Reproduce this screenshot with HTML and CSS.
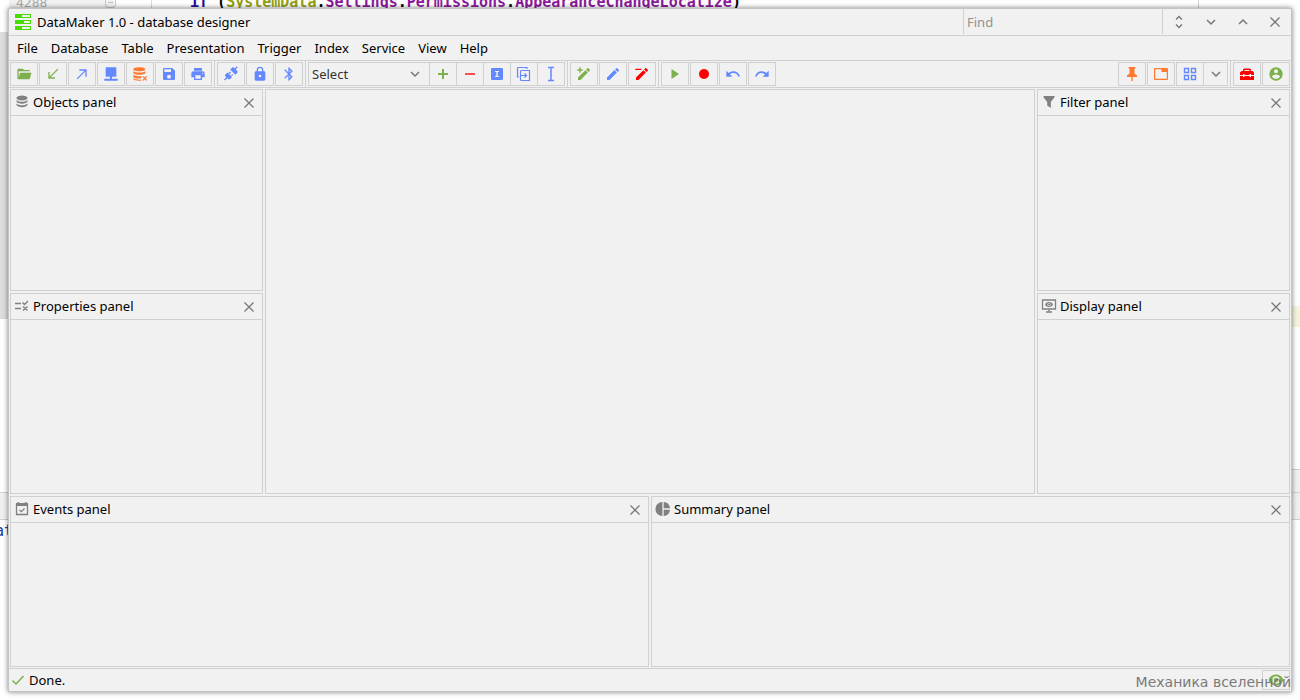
FILE: index.html
```html
<!DOCTYPE html>
<html lang="en">
<head>
  <meta charset="UTF-8">
  <meta name="viewport" content="width=device-width, initial-scale=1.0">
  <title>DataMaker 1.0 - database designer</title>
  <link rel="stylesheet" href="styles.css">
</head>
<body>

  <!-- Icons used more than once -->
  <svg class="sprite" aria-hidden="true">
    <symbol id="close" viewBox="0 0 16 16"><path d="M3.5 3.5l9 9M12.5 3.5l-9 9" fill="none" stroke="currentColor" stroke-width="1.3"/></symbol>
    <symbol id="down" viewBox="0 0 16 16"><path d="M4 6l4 4 4-4" fill="none" stroke="currentColor" stroke-width="1.5"/></symbol>
  </svg>

  <!-- Code editor behind the window -->
  <div class="editor" aria-hidden="true">
    <div class="gutter"><span>4288</span><i class="fold"></i></div>
    <div class="code"><b class="kw">if</b> (<span class="type">SystemData</span>.<span class="prop">Settings</span>.<span class="prop">Permissions</span>.<span class="prop">AppearanceChangeLocalize</span>)</div>
    <div class="margin-line"></div>
    <div class="strip strip-left"></div>
    <div class="strip strip-tabs"></div>
    <div class="strip strip-mark"></div>
    <div class="strip strip-right"></div>
    <div class="word">at</div>
  </div>

  <div class="window">
    <header class="titlebar">
      <svg class="logo" viewBox="0 0 16 16"><path fill="#4bdc05" fill-rule="evenodd" d="M0 0h16v4H0zM7 1v2h8V1zM0 6h16v4H0zM9 7v2h6V7zM0 12h16v4H0zM7 13v2h8v-2z"/></svg>
      <h1>DataMaker 1.0 - database designer</h1>
      <input class="find" type="text" placeholder="Find" aria-label="Find">
      <div class="window-buttons">
        <button aria-label="Collapse"><svg viewBox="0 0 16 16"><path d="M5 5.5l3-3 3 3M5 10.5l3 3 3-3" fill="none" stroke="currentColor" stroke-width="1.4"/></svg></button>
        <button aria-label="Minimize"><svg><use href="#down"/></svg></button>
        <button aria-label="Maximize"><svg viewBox="0 0 16 16"><path d="M4 10l4-4 4 4" fill="none" stroke="currentColor" stroke-width="1.5"/></svg></button>
        <button aria-label="Close"><svg><use href="#close"/></svg></button>
      </div>
    </header>

    <nav class="menu">
      <a href="#">File</a>
      <a href="#">Database</a>
      <a href="#">Table</a>
      <a href="#">Presentation</a>
      <a href="#">Trigger</a>
      <a href="#">Index</a>
      <a href="#">Service</a>
      <a href="#">View</a>
      <a href="#">Help</a>
    </nav>

    <div class="toolbar">
      <div class="group">
        <button class="green" aria-label="Open"><svg viewBox="0 0 24 24"><path d="M19,20H4C2.89,20 2,19.1 2,18V6C2,4.89 2.89,4 4,4H10L12,6H19A2,2 0 0,1 21,8L4,8V18L6.14,10H23.21L20.93,18.5C20.7,19.37 19.92,20 19,20Z"/></svg></button>
        <button class="green" aria-label="Import"><svg viewBox="0 0 24 24"><path d="M20,5.41L18.59,4L7,15.59V9H5V19H15V17H8.41L20,5.41Z"/></svg></button>
        <button class="blue" aria-label="Export"><svg viewBox="0 0 24 24"><path d="M4,18.59L15.59,7H8V5H19V16H17V8.41L5.41,20L4,18.59Z"/></svg></button>
        <button class="blue" aria-label="Connect server"><svg viewBox="0 0 24 24"><path d="M5 2h14a1 1 0 0 1 1 1v12a1 1 0 0 1-1 1h-5.500v3H22v3H2v-3h8.500v-3H5a1 1 0 0 1-1-1V3a1 1 0 0 1 1-1z"/></svg></button>
        <button class="orange" aria-label="Drop database"><svg viewBox="0 0 24 24"><path d="M11 2c5 0 9 1.300 9 3s-4 3-9 3-9-1.300-9-3 4-3 9-3zM2 7.500C3.500 9 7 9.800 11 9.800s7.500-.8 9-2.300V11c-1.500 1.500-5 2.200-9 2.200S2 12.200 2 10.500zM2 13c1.500 1.400 5 2.200 9 2.200 1.200 0 2 0 3-.2v3.500c-1 .2-2 .2-3 .2-5 0-9-1.200-9-2.700zM2 18.300c1.500 1.400 5 2.200 9 2.200h3V22h-3c-5 0-9-1-9-2.500z"/><path d="M16.500 15.500l5.500 6M22 15.500l-5.500 6" stroke="currentColor" stroke-width="2"/></svg></button>
        <button class="blue" aria-label="Save"><svg viewBox="0 0 24 24"><path d="M15,9H5V5H15M12,19A3,3 0 0,1 9,16A3,3 0 0,1 12,13A3,3 0 0,1 15,16A3,3 0 0,1 12,19M17,3H5C3.89,3 3,3.9 3,5V19A2,2 0 0,0 5,21H19A2,2 0 0,0 21,19V7L17,3Z"/></svg></button>
        <button class="blue" aria-label="Print"><svg viewBox="0 0 24 24"><path d="M18,3H6V7H18M19,12A1,1 0 0,1 18,11A1,1 0 0,1 19,10A1,1 0 0,1 20,11A1,1 0 0,1 19,12M16,19H8V14H16M19,8H5A3,3 0 0,0 2,11V17H6V21H18V17H22V11A3,3 0 0,0 19,8Z"/></svg></button>
      </div>

      <div class="group">
        <button class="blue" aria-label="Connection"><svg viewBox="0 0 24 24"><path d="M21.400 7.500c.8.8.8 2 0 2.800l-2.800 2.800-7.800-7.800 2.800-2.800c.8-.8 2-.8 2.800 0l1.100 1.100L20.600.5 22 1.900l-3 3.200zM15.600 13.300l-1.400-1.400-2.800 2.800-2.100-2.100 2.800-2.800-1.400-1.400-2.800 2.800-1.500-1.400-2.800 2.800c-.8.8-.8 2 0 2.800l1.400 1.400-3.500 3.500 1.400 1.400 3.500-3.500 1.400 1.400c.8.8 2 .8 2.800 0l2.800-2.800-1.400-1.400z"/></svg></button>
        <button class="blue" aria-label="Lock"><svg viewBox="0 0 24 24"><path d="M12,17A2,2 0 0,0 14,15C14,13.89 13.1,13 12,13A2,2 0 0,0 10,15A2,2 0 0,0 12,17M18,8A2,2 0 0,1 20,10V20A2,2 0 0,1 18,22H6A2,2 0 0,1 4,20V10C4,8.89 4.900,8 6,8H7V6A5,5 0 0,1 12,1A5,5 0 0,1 17,6V8H18M12,3A3,3 0 0,0 9,6V8H15V6A3,3 0 0,0 12,3Z"/></svg></button>
        <button class="blue" aria-label="Bluetooth"><svg viewBox="0 0 24 24"><path d="M14.88,16.29L13,18.17V14.41M13,5.83L14.88,7.71L13,9.58M17.71,7.71L12,2H11V9.58L6.41,5L5,6.41L10.59,12L5,17.58L6.41,19L11,14.41V22H12L17.71,16.29L13.41,12L17.71,7.71Z"/></svg></button>
      </div>

      <div class="group">
        <div class="joined">
          <div class="picker">
            <select aria-label="Query"><option>Select</option></select>
            <svg><use href="#down"/></svg>
          </div>
          <button class="green" aria-label="Add"><svg viewBox="0 0 16 16"><path d="M7 3h2v4h4v2H9v4H7V9H3V7h4z"/></svg></button>
          <button class="coral" aria-label="Remove"><svg viewBox="0 0 16 16"><path d="M3 7h10v2H3z"/></svg></button>
          <button class="blue" aria-label="Field"><svg viewBox="0 0 16 16"><path fill-rule="evenodd" d="M3 2h10a1 1 0 0 1 1 1v10a1 1 0 0 1-1 1H3a1 1 0 0 1-1-1V3a1 1 0 0 1 1-1zM6 5v1h1.300v4H6v1h4v-1H8.700V6H10V5z"/></svg></button>
          <button class="blue" aria-label="Duplicate"><svg viewBox="0 0 16 16"><path d="M11 3V1.500H2.500a1 1 0 0 0-1 1V11H3M5.500 4.500h8v10h-8a1 1 0 0 1-1-1v-8a1 1 0 0 1 1-1zM4.500 9.500H10M8.500 7.500l2 2-2 2" fill="none" stroke="currentColor" stroke-width="1.200"/></svg></button>
          <button class="blue" aria-label="Text cursor"><svg viewBox="0 0 16 16"><path d="M5 1.500h6M5 14.500h6M8 2v12" fill="none" stroke="currentColor" stroke-width="1.500"/></svg></button>
        </div>
      </div>

      <div class="group">
        <button class="green" aria-label="New"><svg viewBox="0 0 24 24"><path d="M20.7 7c.4-.4.4-1 0-1.400l-2.300-2.300c-.4-.4-1-.4-1.400 0l-1.900 1.800 3.800 3.800zM3 17.200V21h3.800L17.800 9.900l-3.700-3.700zM5 2h2v3h3v2H7v3H5V7H2V5h3z"/></svg></button>
        <button class="blue" aria-label="Edit"><svg viewBox="0 0 24 24"><path d="M20.71,7.04C21.1,6.65 21.1,6 20.71,5.63L18.37,3.29C18,2.9 17.35,2.9 16.96,3.29L15.12,5.12L18.87,8.87M3,17.25V21H6.75L17.81,9.93L14.06,6.18L3,17.25Z"/></svg></button>
        <button class="red" aria-label="Delete"><svg viewBox="0 0 24 24"><path d="M20.7 7c.4-.4.4-1 0-1.400l-2.300-2.300c-.4-.4-1-.4-1.400 0l-1.900 1.800 3.800 3.800zM3 17.200V21h3.800L17.800 9.900l-3.700-3.700zM2 4h9v2H2z"/></svg></button>
      </div>

      <div class="group last">
        <button class="green" aria-label="Run"><svg viewBox="0 0 16 16"><path d="M4.500 3v10L12 8z"/></svg></button>
        <button class="red" aria-label="Record"><svg viewBox="0 0 16 16"><circle cx="8" cy="8" r="5"/></svg></button>
        <button class="blue" aria-label="Undo"><svg viewBox="0 0 24 24"><path d="M12.5,8C9.85,8 7.45,9 5.6,10.6L2,7V16H11L7.38,12.38C8.77,11.22 10.54,10.5 12.5,10.5C16.04,10.5 19.05,12.81 20.1,16L22.47,15.22C21.08,11.03 17.15,8 12.5,8Z"/></svg></button>
        <button class="blue" aria-label="Redo"><svg viewBox="0 0 24 24"><path d="M18.4,10.6C16.55,9 14.15,8 11.5,8C6.85,8 2.92,11.03 1.54,15.22L3.9,16C4.95,12.81 7.95,10.5 11.5,10.5C13.45,10.5 15.23,11.22 16.62,12.38L13,16H22V7L18.4,10.6Z"/></svg></button>
      </div>

      <div class="group push">
        <button class="orange" aria-label="Pin"><svg viewBox="0 0 16 16"><path d="M4.500 1h7v1.500h-1V7.500l2.500 2V11H8.700v4H7.300v-4H3V9.500l2.500-2v-5h-1z"/></svg></button>
        <button class="orange" aria-label="Window"><svg viewBox="0 0 16 16"><path fill-rule="evenodd" d="M2 2h12a1 1 0 0 1 1 1v10a1 1 0 0 1-1 1H2a1 1 0 0 1-1-1V3a1 1 0 0 1 1-1zM2.200 3.200v9.600h11.600V6H8.500V3.200z"/></svg></button>
        <div class="joined">
          <button class="blue" aria-label="Layout"><svg viewBox="0 0 16 16"><path d="M2.500 2.500h4v4h-4zM9.500 2.500h4v4h-4zM2.500 9.500h4v4h-4zM9.500 9.500h4v4h-4z" fill="none" stroke="currentColor" stroke-width="1.400"/></svg></button>
          <button class="narrow" aria-label="More layouts"><svg><use href="#down"/></svg></button>
        </div>
      </div>

      <div class="group last">
        <button class="red" aria-label="Tools"><svg viewBox="0 0 16 16"><path fill-rule="evenodd" d="M5 2.500h6l1 1V5h1.500L15 6.500V9h-3V8h-1.500v1h-5V8H4v1H1V6.500L2.500 5H4V3.500zM5.500 4v1h5V4zM1 10h3v1h1.500v-1h5v1H12v-1h3v4H1z"/></svg></button>
        <button class="green" aria-label="Account"><svg viewBox="0 0 24 24"><path d="M12,19.2C9.5,19.2 7.29,17.92 6,16C6.03,14 10,12.9 12,12.9C14,12.9 17.97,14 18,16C16.71,17.92 14.5,19.2 12,19.2M12,5A3,3 0 0,1 15,8A3,3 0 0,1 12,11A3,3 0 0,1 9,8A3,3 0 0,1 12,5M12,2A10,10 0 0,0 2,12A10,10 0 0,0 12,22A10,10 0 0,0 22,12C22,6.47 17.5,2 12,2Z"/></svg></button>
      </div>
    </div>

    <main class="workspace">
      <div class="upper">
        <section class="panel objects">
          <div class="panel-head">
            <svg viewBox="0 0 16 16"><ellipse cx="8" cy="4" rx="5.500" ry="2.500"/><path d="M2.500 6c1 1.200 3 1.800 5.500 1.800s4.500-.6 5.500-1.800v1.500c-.5 1.400-3 2.200-5.500 2.200S3 8.900 2.500 7.500zM2.500 9.500c1 1.200 3 1.800 5.500 1.800s4.500-.6 5.500-1.800V11c-.5 1.400-3 2.200-5.500 2.200S3 12.400 2.500 11z"/></svg>
            <h2>Objects panel</h2>
            <button aria-label="Close objects panel"><svg><use href="#close"/></svg></button>
          </div>
        </section>
        <section class="panel properties">
          <div class="panel-head">
            <svg viewBox="0 0 16 16"><path d="M1 5.500h6M1 10.500h6M8.500 4.500l2 2L14 3M9 8.500l4.500 4M13.500 8.500l-4.500 4" fill="none" stroke="currentColor" stroke-width="1.400"/></svg>
            <h2>Properties panel</h2>
            <button aria-label="Close properties panel"><svg><use href="#close"/></svg></button>
          </div>
        </section>
        <section class="panel canvas"></section>
        <section class="panel filter">
          <div class="panel-head">
            <svg viewBox="0 0 16 16"><path d="M2.500 2h11v1.200L9.800 8v6L6.200 11.500V8L2.500 3.200z"/></svg>
            <h2>Filter panel</h2>
            <button aria-label="Close filter panel"><svg><use href="#close"/></svg></button>
          </div>
        </section>
        <section class="panel display">
          <div class="panel-head">
            <svg viewBox="0 0 16 16"><path d="M1.500 2h13v9h-13zM8 11v3M5 14h6" fill="none" stroke="currentColor" stroke-width="1.300"/><path fill-rule="evenodd" d="M8 4c2 0 3.500 1.200 4 2.500C11.500 7.800 10 9 8 9S4.500 7.800 4 6.500C4.500 5.200 6 4 8 4zM8 4.900a1.600 1.600 0 1 0 0 3.200 1.600 1.600 0 0 0 0-3.200z"/><circle cx="8" cy="6.500" r="1"/></svg>
            <h2>Display panel</h2>
            <button aria-label="Close display panel"><svg><use href="#close"/></svg></button>
          </div>
        </section>
      </div>
      <div class="lower">
        <section class="panel">
          <div class="panel-head">
            <svg viewBox="0 0 16 16"><path d="M2.500 3.500h11v10h-11z" fill="none" stroke="currentColor" stroke-width="1.300"/><path d="M2 2h1.500V1H5v1h6V1h1.500v1H14v3H2z"/><path d="M5.500 9L7.300 10.700l3.200-3.200" fill="none" stroke="currentColor" stroke-width="1.300"/></svg>
            <h2>Events panel</h2>
            <button aria-label="Close events panel"><svg><use href="#close"/></svg></button>
          </div>
        </section>
        <section class="panel">
          <div class="panel-head">
            <svg viewBox="0 0 16 16"><path d="M7.400 1v14A7 7 0 0 1 7.400 1zM8.700 1A7 7 0 0 1 15 7.300H8.700zM8.700 8.700H15A7 7 0 0 1 8.700 15z"/></svg>
            <h2>Summary panel</h2>
            <button aria-label="Close summary panel"><svg><use href="#close"/></svg></button>
          </div>
        </section>
      </div>
    </main>

    <footer class="status">
      <svg class="green" viewBox="0 0 16 16"><path d="M2.500 8.500l3.500 3.500 7.500-8" fill="none" stroke="currentColor" stroke-width="1.500"/></svg>
      <span>Done.</span>
      <button class="green" aria-label="Preview"><svg viewBox="0 0 16 16"><path fill-rule="evenodd" d="M8 2.500c3.500 0 6.300 2.200 7.500 5.500-1.200 3.300-4 5.500-7.500 5.500S1.700 11.300.5 8C1.700 4.700 4.500 2.500 8 2.500zM8 4.300a3.700 3.700 0 1 0 0 7.400 3.700 3.700 0 0 0 0-7.400z"/><circle cx="8" cy="8" r="2.300"/></svg></button>
    </footer>
    <div class="watermark">Механика вселенной</div>
  </div>

</body>
</html>
```
FILE: styles.css
```css
* {
  box-sizing: border-box;
}

body {
  margin: 0;
  height: 100vh;
  padding: 8px;
  background: #fff;
  color: #000;
  font-family: "Noto Sans", "Open Sans", sans-serif;
  font-size: 13px;
  overflow: hidden;
}

h1, h2 {
  margin: 0;
  font-size: 13px;
  font-weight: 400;
}

button {
  display: flex;
  align-items: center;
  justify-content: center;
  padding: 0;
  border: none;
  background: none;
  color: #777;
}

svg {
  width: 16px;
  height: 16px;
  flex: none;
  fill: currentColor;
}

.sprite {
  display: none;
}

/* Editor in the background */
.editor {
  position: absolute;
  inset: 0;
  overflow: hidden;
  font-family: "DejaVu Sans Mono", monospace;
  font-size: 15px;
}

.gutter {
  position: absolute;
  top: 0;
  left: 9px;
  width: 143px;
  height: 32px;
  padding-left: 7px;
  display: flex;
  align-items: flex-start;
  gap: 58px;
  background: linear-gradient(to right, #f2f2f2 105px, #fff 105px);
  border-right: 1px solid #d8d8d8;
  color: #aaa;
  font-size: 13px;
  line-height: 6px;
}

.fold {
  width: 11px;
  height: 8px;
  border: 1px solid #c8c8c8;
  border-top: none;
  border-radius: 0 0 4px 4px;
  background: linear-gradient(#c0c0c0, #c0c0c0) center 2px / 5px 1px no-repeat;
}

.code {
  position: absolute;
  top: -7px;
  left: 190px;
  line-height: 18px;
  font-weight: 700;
  white-space: pre;
}

.kw {
  color: #2a0c9c;
}

.type {
  color: #94a010;
}

.prop {
  color: #8b1a9c;
}

.margin-line {
  position: absolute;
  top: 0;
  right: 101px;
  width: 1px;
  height: 8px;
  background: #d0d0d0;
}

.strip {
  position: absolute;
  width: 12px;
  background: #f0f0f0;
}

.strip-left {
  top: 32px;
  left: 0;
  height: 287px;
  background: #dedede;
}

.strip-tabs {
  top: 492px;
  left: 0;
  height: 28px;
  border: solid #d0d0d0;
  border-width: 1px 0;
}

.strip-mark {
  top: 306px;
  right: 0;
  height: 21px;
  background: #f6f4dc;
}

.strip-right {
  top: 469px;
  right: 0;
  height: 51px;
  border: solid #d0d0d0;
  border-width: 1px 0;
  background: linear-gradient(#d0d0d0, #d0d0d0) 0 22px / 100% 1px no-repeat #f0f0f0;
}

.word {
  position: absolute;
  top: 522px;
  left: -5px;
  color: #1c3c9c;
  line-height: 18px;
}

/* Application window */
.window {
  position: relative;
  display: flex;
  flex-direction: column;
  height: 100%;
  border: 1px solid #c4c4c4;
  background: #f1f1f1;
  box-shadow: 0 0 5px rgba(0, 0, 0, 0.5);
}

.titlebar {
  display: flex;
  align-items: center;
  height: 27px;
  padding-left: 6px;
  border-bottom: 1px solid #d0d0d0;
}

.logo {
  margin-right: 6px;
}

.find {
  align-self: flex-start;
  width: 200px;
  height: 25px;
  margin-left: auto;
  padding: 0 3px;
  border: solid #d0d0d0;
  border-width: 0 1px;
  background: none;
  font: inherit;
}

.find::placeholder {
  color: #909090;
}

.window-buttons {
  display: flex;
}

.window-buttons button {
  width: 32px;
  height: 26px;
}

.menu {
  display: flex;
  align-items: center;
  gap: 13px;
  height: 25px;
  padding-left: 8px;
  border-bottom: 1px solid #d0d0d0;
}

.menu a {
  color: inherit;
  text-decoration: none;
}

/* Toolbar */
.toolbar {
  display: flex;
  height: 27px;
  border-bottom: 1px solid #d0d0d0;
}

.group {
  display: flex;
  gap: 1px;
  padding: 1px 2px;
  border-right: 1px solid #d0d0d0;
}

.group:first-child {
  padding-left: 1px;
}

.group.last {
  border-right: none;
}

.group.last:last-child {
  padding-right: 1px;
}

.push {
  margin-left: auto;
}

.group > button {
  width: 28px;
  border: 1px solid #d0d0d0;
}

.joined {
  display: flex;
  border: 1px solid #d0d0d0;
}

.joined button {
  width: 27px;
  border-left: 1px solid #d0d0d0;
}

.joined button:first-child {
  width: 26px;
  border-left: none;
}

.joined .narrow {
  width: 24px;
}

.picker {
  display: grid;
  align-items: center;
  width: 120px;
  color: #777;
}

.picker select,
.picker svg {
  grid-area: 1 / 1;
}

.picker select {
  appearance: none;
  width: 100%;
  height: 22px;
  padding: 0 3px;
  border: none;
  background: none;
  color: #333;
  font: inherit;
}

.picker svg {
  justify-self: end;
  margin-right: 6px;
  pointer-events: none;
}

button.green,
svg.green {
  color: #7cb04c;
}

button.blue {
  color: #6488ff;
}

button.orange {
  color: #ff7a30;
}

button.red {
  color: #ff0000;
}

button.coral {
  color: #ff5050;
}

/* Panels */
.workspace {
  flex: 1;
  display: flex;
  flex-direction: column;
  gap: 2px;
  min-height: 0;
  padding: 1px;
}

.upper {
  flex: 405;
  display: grid;
  grid-template-columns: 253px 1fr 253px;
  grid-template-rows: 202fr 201fr;
  grid-template-areas:
    "objects canvas filter"
    "properties canvas display";
  gap: 2px;
}

.objects { grid-area: objects; }
.properties { grid-area: properties; }
.canvas { grid-area: canvas; }
.filter { grid-area: filter; }
.display { grid-area: display; }

.lower {
  flex: 171;
  display: grid;
  grid-template-columns: 1fr 1fr;
  gap: 2px;
}

.panel {
  border: 1px solid #d0d0d0;
}

.panel-head {
  display: flex;
  align-items: center;
  gap: 3px;
  height: 26px;
  padding: 0 5px 0 3px;
  border-bottom: 1px solid #d0d0d0;
  color: #808080;
}

.panel-head > svg {
  margin-bottom: 2px;
}

.panel-head h2 {
  flex: 1;
  padding-bottom: 2px;
  color: #000;
}

/* Status bar */
.status {
  display: flex;
  align-items: center;
  gap: 3px;
  height: 23px;
  padding: 0 1px;
  border-top: 1px solid #d0d0d0;
}

.status button {
  width: 28px;
  height: 20px;
  margin-left: auto;
  border: 1px solid #d0d0d0;
}

.watermark {
  position: absolute;
  right: 0;
  bottom: 0;
  color: #7a7a7a;
  font-family: "DejaVu Sans", sans-serif;
  font-size: 14px;
  line-height: 18px;
}
```
